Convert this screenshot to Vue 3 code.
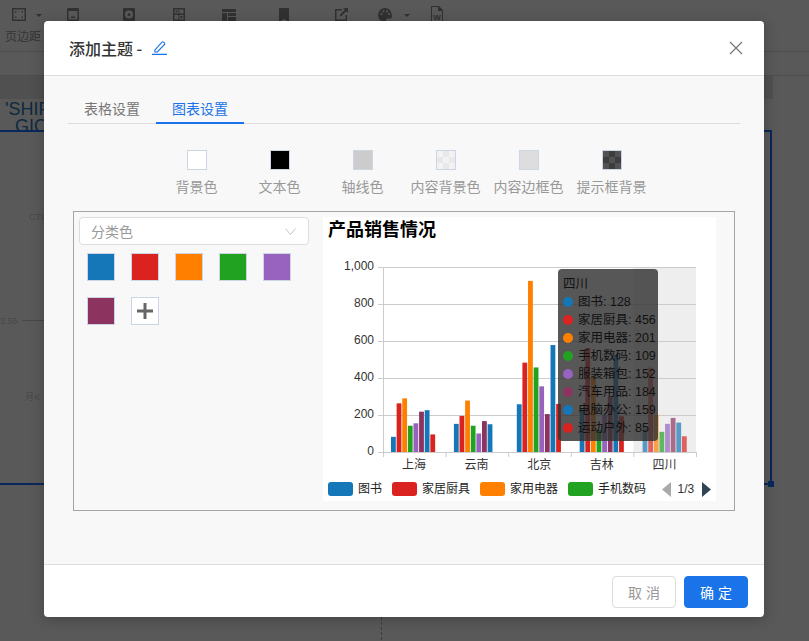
<template>
  <div class="page">
    <div class="toolbar">
      <div class="tool" v-for="t in tools" :key="t.w" :style="{ width: t.w + 'px' }">
        <svg :width="t.size" :height="t.size" :viewBox="`0 0 ${t.size} ${t.size}`" class="tool-ico" :class="{ tall: t.word }">
          <path :d="t.d" fill-rule="evenodd" />
          <text v-if="t.word" x="7" y="13.5" text-anchor="middle" class="word">W</text>
        </svg>
        <span v-if="t.caret" class="caret"></span>
      </div>
    </div>
    <div class="tool-label">页边距</div>
    <div class="strip"></div>
    <div class="band"></div>
    <div class="doc">
      <div class="doc-title">'SHIP<br />&nbsp;&nbsp;GIO</div>
      <div class="doc-frame">
        <span class="handle"></span>
        <span class="ghost g1">CTL</span>
        <span class="ghost g2">3.55</span>
        <span class="ghost-line"></span>
        <span class="ghost g3">月K</span>
      </div>
      <div class="page-gap"></div>
    </div>

    <div class="mask">
      <div class="modal">
        <div class="modal-head">
          <span class="modal-title">添加主题 -</span>
          <svg class="edit" width="15" height="15" viewBox="0 0 15 15" fill="none" stroke="#1a73e8" stroke-width="1.1">
            <path d="M3 9.800 10 2.200a1.200 1.200 0 0 1 1.700 0l.7.6a1.200 1.200 0 0 1 0 1.700L5.400 12H2.800z" />
            <path d="M0 14.400h15" />
          </svg>
          <svg class="close" width="14" height="14" viewBox="0 0 14 14" stroke="#777" stroke-width="1.2">
            <path d="M1 1l12 12M13 1 1 13" />
          </svg>
        </div>

        <div class="modal-body">
          <div class="tabs">
            <div class="tab">表格设置</div>
            <div class="tab active">图表设置</div>
          </div>

          <div class="swatches">
            <div class="swatch" v-for="s in swatches" :key="s.label">
              <span class="chip" :class="s.cls"></span>
              <span class="chip-label">{{ s.label }}</span>
            </div>
          </div>

          <div class="panel">
            <div class="side">
              <div class="select">
                <span>分类色</span>
                <svg width="11" height="7" viewBox="0 0 11 7" fill="none" stroke="#c4c4c4">
                  <path d="M.5.5 5.500 6.500 10.500.5" />
                </svg>
              </div>
              <div class="colors">
                <span class="color" v-for="c in colors.slice(0, 6)" :key="c" :style="{ background: c }"></span>
                <span class="color add">
                  <svg width="16" height="16" viewBox="0 0 16 16" fill="#666">
                    <path d="M6.500 0h3v6.500H16v3H9.500V16h-3V9.500H0v-3h6.500z" />
                  </svg>
                </span>
              </div>
            </div>

            <div class="chart">
              <svg width="393" height="284" viewBox="0 0 393 284">
                <text x="5" y="19" class="c-title">产品销售情况</text>
                <rect x="310.500" y="50" width="62.6" height="185" fill="#eee" />
                <g stroke="#ccc">
                  <line v-for="v in ticks" :key="v" x1="55" x2="373" :y1="yOf(v) + 0.5" :y2="yOf(v) + 0.5" />
                  <line x1="60.5" x2="60.5" y1="50" y2="240" />
                  <line v-for="i in 6" :key="i" :x1="60.5 + (i - 1) * 62.6" :x2="60.5 + (i - 1) * 62.6" y1="235" y2="240" />
                </g>
                <text v-for="v in ticks" :key="'t' + v" x="51" :y="yOf(v) + 3" text-anchor="end" class="c-axis">{{ v.toLocaleString('en-US') }}</text>
                <text v-for="(n, i) in cities" :key="n" :x="91 + i * 62.6" y="252" text-anchor="middle" class="c-axis">{{ n }}</text>
                <template v-for="(row, i) in data" :key="i">
                  <rect
                    v-for="(v, j) in row"
                    :key="j"
                    :x="68 + i * 62.9 + j * 5.62"
                    :y="yOf(v)"
                    width="4.8"
                    :height="235 - yOf(v)"
                    :fill="colors[j]"
                    :opacity="i === 4 ? 0.7 : 1"
                  />
                </template>
                <g v-for="l in legend" :key="l.name">
                  <rect :x="l.x" y="265" width="25" height="14" rx="3" :fill="l.color" />
                  <text :x="l.x + 30" y="276" class="c-legend">{{ l.name }}</text>
                </g>
                <path d="M348 265v15l-9-7.500z" fill="#aaa" />
                <text x="354.5" y="276" class="c-axis">1/3</text>
                <path d="M379 265v15l9-7.500z" fill="#2f4554" />
              </svg>
              <div class="tip">
                <div class="tip-head">四川</div>
                <div class="tip-row" v-for="(n, j) in names" :key="n">
                  <i :style="{ background: colors[j] }"></i>{{ n }}: {{ data[4][j] }}
                </div>
              </div>
            </div>
          </div>
        </div>

        <div class="modal-foot">
          <button class="btn">取 消</button>
          <button class="btn primary">确 定</button>
        </div>
      </div>
    </div>
  </div>
</template>

<script setup>
// 顶部工具栏，被遮罩压暗
const tools = [
  { w: 38, size: 14, caret: true, d: 'M0 0h14v13H0zM1.500 1.500v10h11v-10zM3 3h1.500v1.500H3zM9.500 3H11v1.500H9.500zM3 8.500h1.500V10H3zM9.500 8.500H11V10H9.500z' },
  { w: 70, size: 12, d: 'M1 0h10a1 1 0 0 1 1 1v11a1 1 0 0 1-1 1H1a1 1 0 0 1-1-1V1a1 1 0 0 1 1-1zM1.500 3v8.500h9V3zM4 8.500h4V10H4z' },
  { w: 42, size: 12, d: 'M1 0h10a1 1 0 0 1 1 1v11a1 1 0 0 1-1 1H1a1 1 0 0 1-1-1V1a1 1 0 0 1 1-1zM6 2.500a4 4 0 1 0 0 8 4 4 0 0 0 0-8zM6 5a1.500 1.500 0 1 1 0 3 1.500 1.500 0 0 1 0-3z' },
  { w: 58, size: 12, d: 'M0 0h12v13H0zM1.500 1.500v4h4v-4zM6.500 1.500v4h4v-4zM1.500 7v4.500h4V7zM6.500 7v4.500h4V7zM2.500 2.500h2v2h-2zM7.500 8h2v2h-2z' },
  { w: 42, size: 14, d: 'M0 1h14v3H0zM0 5h5v8H0zM6 5h8v3H6zM6 9h8v4H6z' },
  { w: 68, size: 10, d: 'M1 0h8a1 1 0 0 1 1 1v13l-5-3-5 3V1a1 1 0 0 1 1-1z' },
  { w: 46, size: 13, d: 'M0 1h7v1.500H1.500v9h9V7H12v6H0zM8 0h5v5l-1.800-1.800L6 8.500 4.600 7l5.200-5.200z' },
  { w: 42, size: 14, caret: true, d: 'M7 0a7 7 0 1 0 0 14c1.200 0 1.500-.8 1.200-1.600-.4-1 .2-1.900 1.300-1.900H12c1.200 0 2-.9 2-2.200C14 3.400 11 0 7 0zM3.500 5a1 1 0 1 0 0 2 1 1 0 0 0 0-2zM5.500 2.200a1 1 0 1 0 0 2 1 1 0 0 0 0-2zM9 2.200a1 1 0 1 0 0 2 1 1 0 0 0 0-2zM11 5a1 1 0 1 0 0 2 1 1 0 0 0 0-2z' },
  { w: 64, size: 16, word: true, d: 'M1 0h8l4 4v12H1zM2 1v14h10V5H8V1z' },
]

const swatches = [
  { label: '背景色', cls: 'c-white' },
  { label: '文本色', cls: 'c-black' },
  { label: '轴线色', cls: 'c-axisline' },
  { label: '内容背景色', cls: 'c-check' },
  { label: '内容边框色', cls: 'c-border' },
  { label: '提示框背景', cls: 'c-darkcheck' },
]

const colors = ['#1577b8', '#da231f', '#ff7f00', '#22a221', '#9763be', '#8c335f', '#1577b8', '#da231f']
const names = ['图书', '家居厨具', '家用电器', '手机数码', '服装箱包', '汽车用品', '电脑办公', '运动户外']
const cities = ['上海', '云南', '北京', '吉林', '四川']
const ticks = [0, 200, 400, 600, 800, 1000]

const data = [
  [82, 263, 290, 142, 155, 218, 226, 95],
  [152, 195, 278, 142, 100, 167, 150],
  [258, 483, 925, 457, 355, 205, 578, 260],
  [229, 562, 409, 120, 200, 300, 526, 193],
  [128, 456, 201, 109, 152, 184, 159, 85],
]

const legend = [
  { name: '图书', x: 5, color: colors[0] },
  { name: '家居厨具', x: 69, color: colors[1] },
  { name: '家用电器', x: 157, color: colors[2] },
  { name: '手机数码', x: 245, color: colors[3] },
]

// 1000 = 185px，零点在 235
const yOf = (v) => 235 - v * 0.185
</script>

<style scoped>
.page {
  position: relative;
  width: 809px;
  height: 641px;
  overflow: hidden;
  background: #fff;
  font-family: "Liberation Sans", "Noto Sans CJK SC", sans-serif;
  color: #333;
}

.toolbar {
  display: flex;
  height: 30px;
  box-sizing: border-box;
  padding-top: 8px;
}

.tool {
  position: relative;
  display: flex;
  justify-content: center;
  flex: none;
}

.tool-ico {
  display: block;
  fill: #8c8c8c;
  overflow: visible;
}

.tool-ico.tall {
  margin-top: -2px;
}

.word {
  font-size: 8px;
  font-weight: 700;
}

.caret {
  position: absolute;
  top: 6px;
  right: -4px;
  border: 3px solid transparent;
  border-top: 3px solid #8c8c8c;
  border-bottom: 0;
}

.tool-label {
  height: 22px;
  box-sizing: border-box;
  padding-left: 5px;
  font-size: 12px;
  line-height: 14px;
  color: #999;
  border-bottom: 1px solid #ddd;
}

.strip {
  height: 23px;
  border-bottom: 1px solid #ddd;
}

.band {
  width: 773px;
  height: 23px;
  background: #e4e4e4;
}

.doc {
  position: relative;
  padding-top: 2px;
}

.doc-title {
  height: 29px;
  padding-left: 5px;
  font-size: 18px;
  line-height: 17px;
  color: #2a78b5;
}

.doc-frame {
  position: relative;
  width: 772px;
  height: 355px;
  box-sizing: border-box;
  border: solid #1c73ff;
  border-width: 2px 2px 2px 0;
}

.handle {
  position: absolute;
  right: -4px;
  bottom: -4px;
  width: 6px;
  height: 6px;
  background: #1c73ff;
}

.ghost {
  position: absolute;
  font-size: 9px;
  color: #d0d0d0;
}

.g1 { left: 29px; top: 80px; }
.g2 { left: 0; top: 184px; }
.g3 { left: 25px; top: 258px; }

.ghost-line {
  position: absolute;
  left: 22px;
  top: 188px;
  width: 30px;
  border-top: 1px solid #ccc;
}

.page-gap {
  width: 381px;
  height: 160px;
  border-right: 1px dashed #aaa;
}

.mask {
  position: absolute;
  inset: 0;
  padding: 21px 0 0 44px;
  background: rgba(0, 0, 0, 0.65);
}

.modal {
  display: flex;
  flex-direction: column;
  width: 720px;
  height: 596px;
  background: #fff;
  border-radius: 4px;
  overflow: hidden;
  box-shadow: 0 2px 14px rgba(0, 0, 0, 0.25);
}

.modal-head {
  display: flex;
  align-items: center;
  height: 55px;
  padding: 0 21px 0 25px;
  border-bottom: 1px solid #ddd;
  box-sizing: border-box;
}

.modal-title {
  font-size: 16px;
  font-weight: 500;
  color: #333;
  font-family: "Noto Sans CJK SC", sans-serif;
  white-space: pre;
}

.edit {
  margin: -2px 0 0 10px;
}

.close {
  margin-left: auto;
}

.modal-body {
  flex: 1;
  padding: 20px 24px 0;
  background: #f8f8f8;
}

.tabs {
  display: flex;
  border-bottom: 1px solid #ddd;
}

.tab {
  width: 88px;
  height: 27px;
  font-size: 14px;
  line-height: 27px;
  text-align: center;
  color: #777;
}

.tab.active {
  height: 28px;
  margin-bottom: -1px;
  box-sizing: border-box;
  color: #1a73e8;
  border-bottom: 2px solid #1a73e8;
}

.swatches {
  display: flex;
  justify-content: center;
  margin-top: 26px;
}

.swatch {
  display: flex;
  flex-direction: column;
  align-items: center;
  width: 83px;
}

.chip {
  width: 20px;
  height: 20px;
  box-sizing: border-box;
  border: 1px solid #ccd5e3;
  background: #fff;
}

.c-black { background: #000; }
.c-axisline { background: #ccc; }
.c-border { background: #ddd; }
.c-check {
  background: repeating-conic-gradient(#e8e8e8 0 25%, #f2f2f2 0 50%) 0 0 / 12px 12px;
}
.c-darkcheck {
  background: repeating-conic-gradient(#3d3d3d 0 25%, #525252 0 50%) 0 0 / 12px 12px;
}

.chip-label {
  margin-top: 7px;
  font-size: 14px;
  line-height: 20px;
  color: #999;
  white-space: nowrap;
}

.panel {
  display: flex;
  height: 300px;
  margin: 14px 5px 0;
  box-sizing: border-box;
  border: 1px solid #a5a5a5;
  padding: 5px 0 0 5px;
}

.side {
  flex: none;
  width: 244px;
}

.select {
  display: flex;
  align-items: center;
  justify-content: space-between;
  width: 230px;
  height: 28px;
  box-sizing: border-box;
  padding: 0 12px 0 11px;
  font-size: 14px;
  color: #999;
  background: #fff;
  border: 1px solid #ddd;
  border-radius: 4px;
}

.colors {
  display: flex;
  flex-wrap: wrap;
  gap: 16px;
  padding: 8px 0 0 8px;
}

.color {
  display: flex;
  align-items: center;
  justify-content: center;
  width: 28px;
  height: 28px;
  box-sizing: border-box;
  border: 1px solid #ccd5e3;
}

.add {
  background: #fff;
}

.chart {
  position: relative;
  width: 393px;
  height: 284px;
  background: #fff;
}

.chart svg {
  display: block;
}

.c-title {
  font-size: 18px;
  font-weight: 700;
  fill: #000;
}

.c-axis {
  font-size: 12px;
  fill: #333;
}

.c-legend {
  font-size: 12px;
  fill: #222;
}

.tip {
  position: absolute;
  left: 235px;
  top: 52px;
  width: 100px;
  height: 172px;
  box-sizing: border-box;
  padding: 6px 5px;
  font-size: 12.5px;
  line-height: 18px;
  color: #111;
  background: rgba(50, 50, 50, 0.82);
  border-radius: 4px;
  white-space: nowrap;
}

.tip-row i {
  display: inline-block;
  width: 10px;
  height: 10px;
  margin-right: 5px;
  border-radius: 50%;
  vertical-align: -1px;
}

.modal-foot {
  display: flex;
  justify-content: flex-end;
  gap: 8px;
  height: 53px;
  padding: 11px 16px 0 0;
  box-sizing: border-box;
  border-top: 1px solid #ddd;
}

.btn {
  width: 64px;
  height: 32px;
  font-family: inherit;
  font-size: 14px;
  color: #999;
  background: #fff;
  border: 1px solid #ddd;
  border-radius: 4px;
}

.btn.primary {
  color: #fff;
  background: #1a73e8;
  border-color: #1a73e8;
}
</style>
